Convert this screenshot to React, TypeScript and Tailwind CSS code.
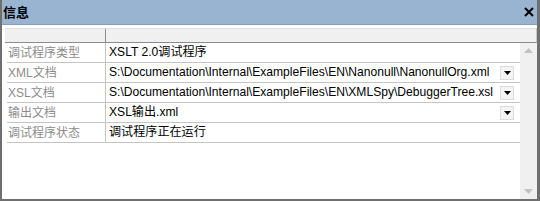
import React from "react";

const rows: { label: string; value: string; dropdown?: boolean }[] = [
    { label: "调试程序类型", value: "XSLT 2.0调试程序" },
    { label: "XML文档", value: "S:\\Documentation\\Internal\\ExampleFiles\\EN\\Nanonull\\NanonullOrg.xml", dropdown: true },
    { label: "XSL文档", value: "S:\\Documentation\\Internal\\ExampleFiles\\EN\\XMLSpy\\DebuggerTree.xsl", dropdown: true },
    { label: "输出文档", value: "XSL输出.xml", dropdown: true },
    { label: "调试程序状态", value: "调试程序正在运行" },
];

function DropButton() {
    return (
        <div className="w-[14px] h-[14px] mr-[6px] shrink-0 flex items-center justify-center bg-[#f4f4f4] border border-[#dcdcdc]">
            <svg width="7" height="4" viewBox="0 0 7 4">
                <path d="M0 0H7L3.5 4Z" fill="#000" />
            </svg>
        </div>
    );
}

export default function App() {
    return (
        <div
            className="w-[540px] h-[201px] flex flex-col bg-white border-l-2 border-r-[3px] border-b-2 border-[#6f6f6f] overflow-hidden"
            style={{ fontFamily: '"Liberation Sans", "Noto Sans CJK SC", sans-serif' }}
        >
            {/* Title bar */}
            <div className="h-[25px] shrink-0 flex items-center justify-between bg-[#99b4d1] border-b border-[#8a9cb0] pl-[1px] pr-[2px]">
                <span className="text-[13px] font-bold text-black leading-none">信息</span>
                <svg width="10" height="10" viewBox="0 0 10 10" className="mr-[1px]">
                    <path d="M1 1L9 9M9 1L1 9" stroke="#000" strokeWidth="2" />
                </svg>
            </div>

            <div className="flex-1 flex flex-col pt-[3px] pl-[3px]">
                {/* Header */}
                <div className="h-[15px] shrink-0 flex bg-[#f0f0f0] border-t border-[#e0e0e0] border-b border-b-[#8c8c8c] border-r border-r-[#c8c8c8]">
                    <div className="w-[101px] border-r border-[#8c8c8c]" />
                    <div className="flex-1" />
                </div>

                <div className="flex-1 flex">
                    {/* Grid */}
                    <div className="flex-1 flex flex-col pl-[2px]">
                        {rows.map((r) => (
                            <div key={r.label} className="h-[20px] flex border-b border-[#c4c4c4]">
                                <div className="w-[99px] shrink-0 flex items-center pl-[1px] text-[12px] text-[#8c8c8c] border-r border-[#c4c4c4] whitespace-nowrap">
                                    {r.label}
                                </div>
                                <div className="flex-1 min-w-0 flex items-center justify-between gap-[4px] pl-[3px] text-[12.1px] text-black whitespace-nowrap">
                                    <span className="min-w-0 overflow-hidden">{r.value}</span>
                                    {r.dropdown && <DropButton />}
                                </div>
                            </div>
                        ))}
                    </div>

                    {/* Scrollbar */}
                    <div className="w-[17px] shrink-0 flex flex-col justify-between items-center bg-[#f0f0f0] py-[5px]">
                        <svg width="9" height="5" viewBox="0 0 9 5">
                            <path d="M0 5H9L4.5 0Z" fill="#c2c2c2" />
                        </svg>
                        <svg width="9" height="5" viewBox="0 0 9 5">
                            <path d="M0 0H9L4.5 5Z" fill="#c2c2c2" />
                        </svg>
                    </div>
                </div>
            </div>
        </div>
    );
}
